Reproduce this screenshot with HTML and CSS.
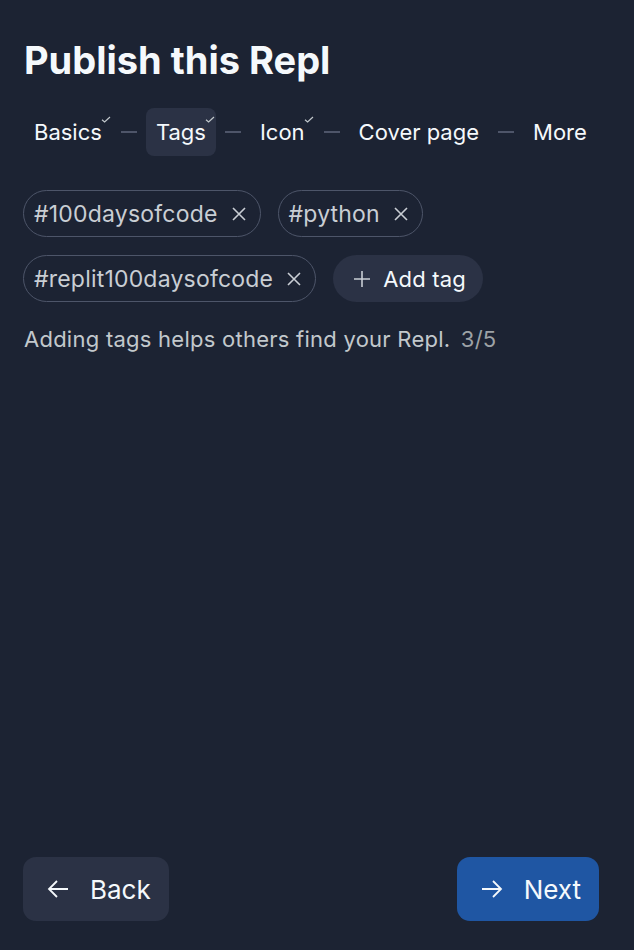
FILE: index.html
```html
<!DOCTYPE html>
<html lang="en">
<head>
<meta charset="utf-8">
<title>Publish this Repl</title>
<link rel="stylesheet" href="styles.css">
</head>
<body>
<div class="page">
  <h1 class="title">Publish this Repl</h1>
  <nav class="steps">
    <div class="step done"><span class="step-label">Basics</span><svg class="check" viewBox="0 0 10 7" width="10" height="7"><path d="M1 3.8 L3.6 6 L9 1" fill="none" stroke="currentColor" stroke-width="1.2"/></svg></div>
    <span class="dash"></span>
    <div class="step done active"><span class="step-label">Tags</span><svg class="check" viewBox="0 0 10 7" width="10" height="7"><path d="M1 3.8 L3.6 6 L9 1" fill="none" stroke="currentColor" stroke-width="1.2"/></svg></div>
    <span class="dash"></span>
    <div class="step done"><span class="step-label">Icon</span><svg class="check" viewBox="0 0 10 7" width="10" height="7"><path d="M1 3.8 L3.6 6 L9 1" fill="none" stroke="currentColor" stroke-width="1.2"/></svg></div>
    <span class="dash"></span>
    <div class="step"><span class="step-label">Cover page</span></div>
    <span class="dash"></span>
    <div class="step"><span class="step-label">More</span></div>
  </nav>

  <div class="tags">
    <span class="tag">#100daysofcode<svg class="x" viewBox="0 0 16 16" width="16" height="16"><path d="M2 2 L14 14 M14 2 L2 14" stroke="currentColor" stroke-width="1.6" fill="none"/></svg></span>
    <span class="tag">#python<svg class="x" viewBox="0 0 16 16" width="16" height="16"><path d="M2 2 L14 14 M14 2 L2 14" stroke="currentColor" stroke-width="1.6" fill="none"/></svg></span>
    <span class="tag">#replit100daysofcode<svg class="x" viewBox="0 0 16 16" width="16" height="16"><path d="M2 2 L14 14 M14 2 L2 14" stroke="currentColor" stroke-width="1.6" fill="none"/></svg></span>
    <button class="add-tag"><svg class="plus" viewBox="0 0 18 18" width="18" height="18"><path d="M9 1 V17 M1 9 H17" stroke="currentColor" stroke-width="1.6" fill="none"/></svg>Add tag</button>
  </div>

  <p class="hint">Adding tags helps others find your Repl. <span class="count">3/5</span></p>

  <footer class="footer">
    <button class="btn btn-back"><svg class="arrow" viewBox="0 0 22 20" width="22" height="20"><path d="M21 10 H2 M10 2 L2 10 L10 18" stroke="currentColor" stroke-width="1.8" fill="none"/></svg>Back</button>
    <button class="btn btn-next"><svg class="arrow" viewBox="0 0 22 20" width="22" height="20"><path d="M1 10 H20 M12 2 L20 10 L12 18" stroke="currentColor" stroke-width="1.8" fill="none"/></svg>Next</button>
  </footer>
</div>
</body>
</html>
```

FILE: styles.css
```css
* { box-sizing: border-box; }
html, body {
  margin: 0;
  padding: 0;
  background: #1c2333;
}
body {
  font-family: "Inter", "Noto Sans", sans-serif;
  color: #f5f9fc;
}
.page {
  height: 950px;
  display: flex;
  flex-direction: column;
  padding: 34px 35px 29px 24px;
}
.title {
  margin: 0;
  font-size: 38px;
  line-height: 52px;
  font-weight: 700;
}
.steps {
  display: flex;
  align-items: center;
  gap: 9px;
  margin-top: 22px;
}
.step {
  position: relative;
  height: 48px;
  display: flex;
  align-items: center;
  padding: 0 10px;
  border-radius: 8px;
  font-size: 22px;
  color: #f5f9fc;
}
.step.active { background: #2b3245; }
.check {
  position: absolute;
  right: 1px;
  top: 8px;
  color: #c2c8cc;
}
.dash {
  width: 16px;
  height: 2px;
  background: #4e5569;
}
.tags {
  display: flex;
  flex-wrap: wrap;
  gap: 18px 17px;
  margin-top: 34px;
  margin-left: -1px;
}
.tag {
  display: inline-flex;
  align-items: center;
  height: 47px;
  padding: 0 13px 0 10px;
  border: 1.5px solid #4d5569;
  border-radius: 24px;
  font-size: 23px;
  letter-spacing: 0.2px;
  color: #c9ced4;
  gap: 13px;
}
.x { color: #c9ced4; }
.add-tag {
  display: inline-flex;
  align-items: center;
  height: 47px;
  padding: 0 17px 0 20px;
  border: none;
  border-radius: 24px;
  background: #2b3245;
  color: #f5f9fc;
  font-family: inherit;
  font-size: 22px;
  letter-spacing: 0.2px;
  gap: 12px;
}
.plus { color: #c9ced4; }
.hint {
  margin: 24px 0 0;
  font-size: 22px;
  letter-spacing: 0.25px;
  color: #c2c8cc;
}
.count { color: #9da2a6; margin-left: 4px; }
.footer {
  margin-top: auto;
  display: flex;
  justify-content: space-between;
  margin-left: -1px;
}
.btn {
  display: inline-flex;
  align-items: center;
  height: 64px;
  border: none;
  border-radius: 13px;
  font-family: inherit;
  font-size: 26px;
  color: #f5f9fc;
  gap: 21px;
  padding: 0 18px 0 24px;
}
.btn-back { background: #2b3245; }
.btn-next { background: #1f56a3; }
```
